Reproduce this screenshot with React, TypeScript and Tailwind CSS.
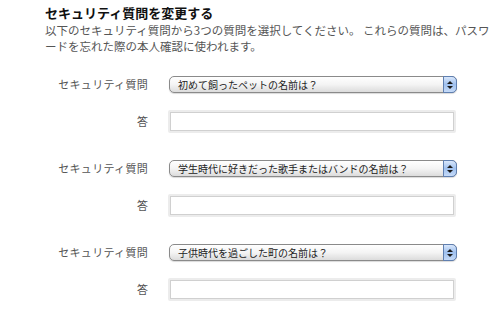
import React from "react";

const font = { fontFamily: '"Noto Sans CJK JP", "Noto Sans", sans-serif' };

function SelectBox({ text }: { text: string }) {
  return (
    <div className="relative flex h-[17px] w-[288px] items-center rounded-[5px] border border-[#8a8a8a] bg-gradient-to-b from-[#ffffff] via-[#f4f4f4] to-[#dcdcdc] shadow-[0_1px_1px_rgba(0,0,0,0.15)]">
      <span className="pl-[8px] text-[10px] leading-none text-[#222]">{text}</span>
      <div className="absolute right-[-1px] top-[-1px] flex h-[17px] w-[14px] flex-col items-center justify-center gap-[2px] rounded-r-[5px] border border-[#5f7fb0] bg-gradient-to-b from-[#d9e7fb] via-[#9fc0ee] to-[#c6dbf8]">
        <svg width="6" height="3" viewBox="0 0 6 3"><path d="M0 3 L3 0 L6 3 Z" fill="#1a1a1a" /></svg>
        <svg width="6" height="3" viewBox="0 0 6 3"><path d="M0 0 L3 3 L6 0 Z" fill="#1a1a1a" /></svg>
      </div>
    </div>
  );
}

function Input() {
  return (
    <div className="h-[23px] w-[288px] rounded-[2px] bg-[#ececec] p-[2px]">
      <div className="h-full w-full border border-[#d0d0d0] bg-white" />
    </div>
  );
}

function Row({ q }: { q: string }) {
  return (
    <div className="flex flex-col">
      <div className="flex items-center">
        <div className="w-[103px] text-right text-[11px] tracking-[0.3px] text-[#555]">セキュリティ質問</div>
        <div className="ml-[21px]">
          <SelectBox text={q} />
        </div>
      </div>
      <div className="mt-[17px] flex items-center">
        <div className="w-[103px] text-right text-[11px] text-[#555]">答</div>
        <div className="ml-[20px]">
          <Input />
        </div>
      </div>
    </div>
  );
}

export default function App() {
  return (
    <div className="h-[316px] w-[504px] bg-white pl-[45px] pt-[5px]" style={font}>
      <h2 className="text-[13px] font-bold leading-[16px] text-[#111]">セキュリティ質問を変更する</h2>
      <p className="mt-[1px] w-[448px] text-[11.5px] leading-[16px] text-[#555]">
        以下のセキュリティ質問から3つの質問を選択してください。 これらの質問は、パスワードを忘れた際の本人確認に使われます。
      </p>
      <div className="mt-[22px] flex flex-col gap-[27px]">
        <Row q="初めて飼ったペットの名前は？" />
        <Row q="学生時代に好きだった歌手またはバンドの名前は？" />
        <Row q="子供時代を過ごした町の名前は？" />
      </div>
    </div>
  );
}
